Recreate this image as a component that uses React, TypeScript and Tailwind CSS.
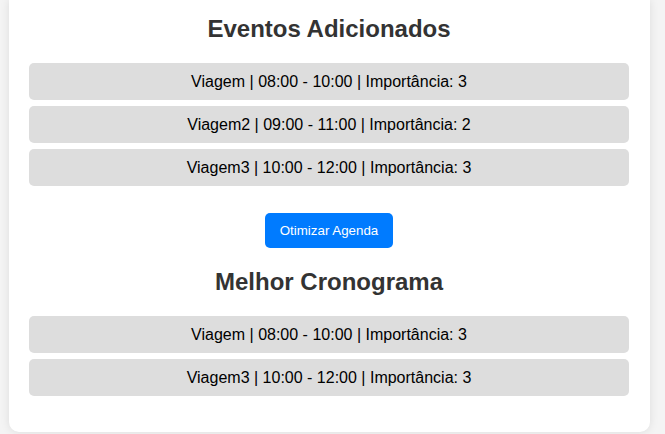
const eventos = [
  { nome: "Viagem", inicio: "08:00", fim: "10:00", importancia: 3 },
  { nome: "Viagem2", inicio: "09:00", fim: "11:00", importancia: 2 },
  { nome: "Viagem3", inicio: "10:00", fim: "12:00", importancia: 3 },
];

const melhor = [eventos[0], eventos[2]];

type Evento = (typeof eventos)[number];

const EventoItem = ({ evento }: { evento: Evento }) => (
  <li className="flex h-[37px] items-center justify-center rounded-[5px] bg-[#dddddd] text-[16px] text-black">
    {evento.nome} | {evento.inicio} - {evento.fim} | Importância: {evento.importancia}
  </li>
);

export default function App() {
  return (
    <div className="min-h-[434px] bg-[#f4f4f4] font-['Liberation_Sans',Arial,sans-serif]">
      <div className="ml-[9px] w-[641px] rounded-b-[10px] bg-white pb-[36px] pl-[20px] pr-[21px] pt-[15px] shadow-[0_0_10px_rgba(0,0,0,0.1)]">
        <h2 className="mb-[20px] text-center text-[24px] font-bold leading-[28px] text-[#333333]">
          Eventos Adicionados
        </h2>
        <ul className="flex flex-col gap-[6px]">
          {eventos.map((e, i) => (
            <EventoItem key={i} evento={e} />
          ))}
        </ul>

        <div className="mt-[27px] flex justify-center">
          <button className="h-[35px] rounded-[5px] bg-[#007bff] px-[15px] text-[13.33px] text-white">
            Otimizar Agenda
          </button>
        </div>

        <h2 className="mb-[20px] mt-[20px] text-center text-[24px] font-bold leading-[28px] text-[#333333]">
          Melhor Cronograma
        </h2>
        <ul className="flex flex-col gap-[6px]">
          {melhor.map((e, i) => (
            <EventoItem key={i} evento={e} />
          ))}
        </ul>
      </div>
    </div>
  );
}
